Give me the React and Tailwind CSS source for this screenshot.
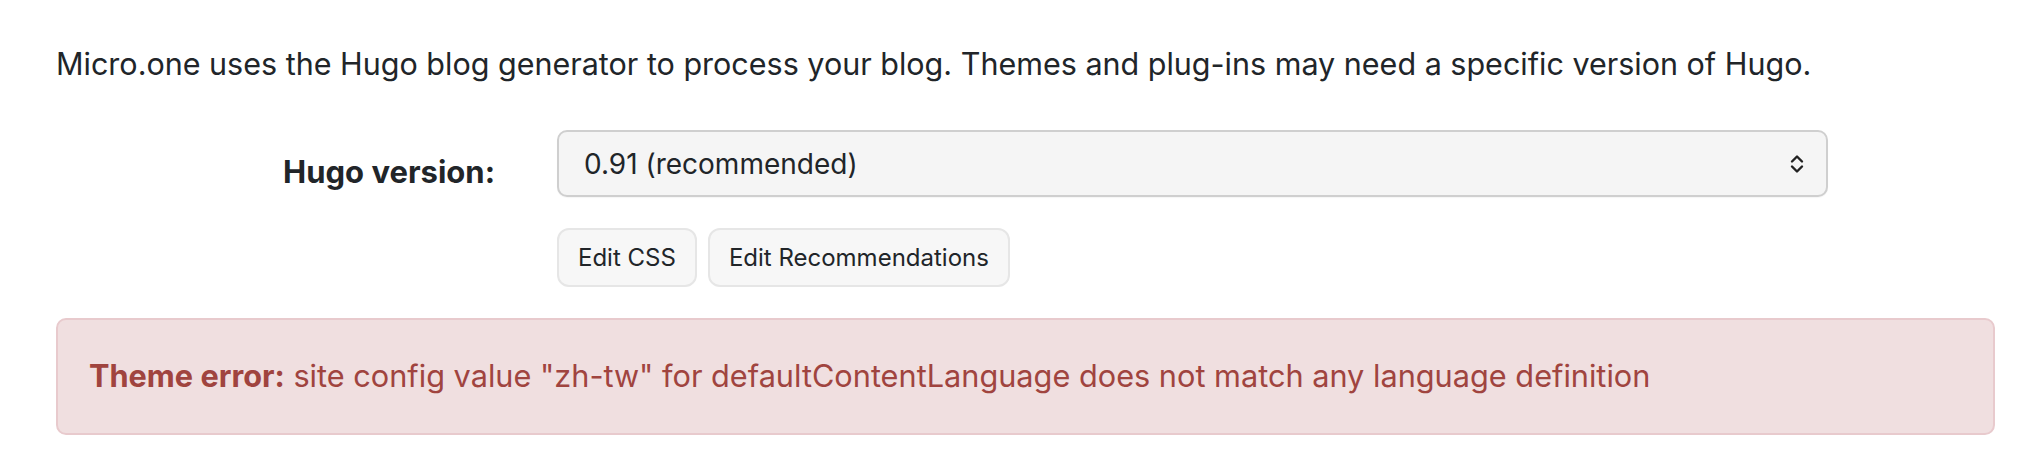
export default function App() {
  return (
    <div className="min-h-[472px] w-[2038px] bg-white font-['Inter',sans-serif] text-[#212529]">
      <div className="w-[1995px] pl-[56px] pt-[43px]">
        <p className="text-[30.5px] leading-[42px]">
          Micro.one uses the Hugo blog generator to process your blog. Themes and plug-ins may need a specific version of Hugo.
        </p>

        <div className="mt-[45px] flex">
          <div className="w-[501px] shrink-0 pr-[62px] pt-[21px] text-right">
            <label className="text-[31px] font-bold leading-[42px]">Hugo version:</label>
          </div>
          <div className="flex w-[1271px] flex-col">
            <div className="relative flex h-[67px] items-center rounded-[10px] border-2 border-[#cfcfcf] bg-[#f5f5f5] pl-[25px] shadow-[0_1px_1px_rgba(0,0,0,0.04)]">
              <span className="text-[28px]">0.91 (recommended)</span>
              <svg
                className="absolute right-[22px] top-1/2 -translate-y-1/2"
                width="14"
                height="19"
                viewBox="0 0 14 19"
                fill="none"
                stroke="#222"
                strokeWidth="2.4"
                strokeLinecap="round"
                strokeLinejoin="round"
              >
                <path d="M2 7 L7 2 L12 7" />
                <path d="M2 12 L7 17 L12 12" />
              </svg>
            </div>
            <div className="mt-[31px] flex gap-[11px]">
              <button className="h-[59px] rounded-[12px] border-2 border-[#e6e6e6] bg-[#f7f7f7] px-[19px] text-[24px]">
                Edit CSS
              </button>
              <button className="h-[59px] rounded-[12px] border-2 border-[#e6e6e6] bg-[#f7f7f7] px-[19px] text-[24px]">
                Edit Recommendations
              </button>
            </div>
          </div>
        </div>

        <div className="mt-[31px] flex h-[117px] items-center rounded-[10px] border-2 border-[#e8cacd] bg-[#f0dfe0] pl-[31px] text-[30.7px] text-[#a0443f]">
          <span>
            <strong className="font-bold">Theme error:</strong> site config value "zh-tw" for defaultContentLanguage does not match any language definition
          </span>
        </div>
      </div>
    </div>
  );
}
